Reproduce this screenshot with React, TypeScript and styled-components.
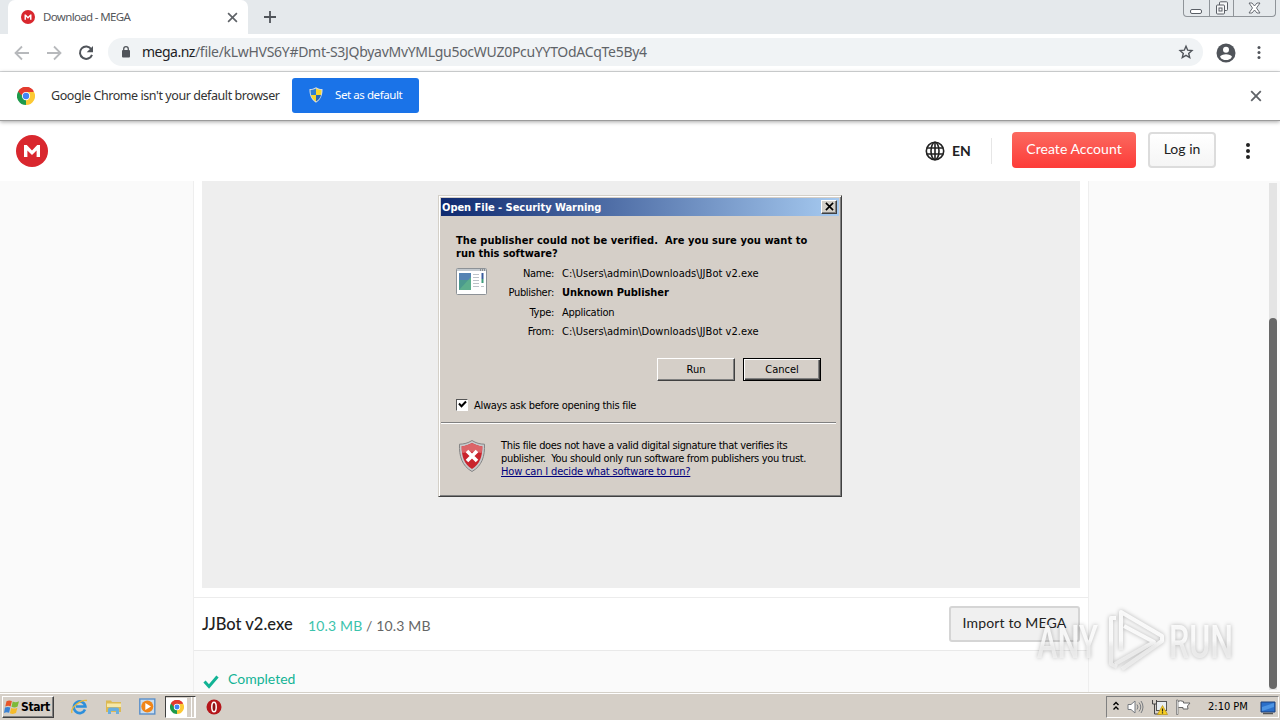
import type { ReactNode } from 'react';
import styled, { createGlobalStyle, css } from 'styled-components';

const GlobalStyle = createGlobalStyle`
  * {
    box-sizing: border-box;
  }
  body {
    margin: 0;
    overflow: hidden;
    background: #fff;
  }
`;

const tahoma = `Tahoma, 'DejaVu Sans Condensed', 'DejaVu Sans', sans-serif`;
const chromeUi = `'Noto Sans', 'Open Sans', sans-serif`;
const lato = `Lato, sans-serif`;

const Screen = styled.div`
  position: relative;
  display: flex;
  flex-direction: column;
  width: 1280px;
  height: 720px;
  overflow: hidden;
  background: #fff;
`;

const Text = styled.span<{ $spacing?: number }>`
  white-space: pre;
  letter-spacing: ${({ $spacing }) => $spacing ?? 0}px;
`;

/* ---------- browser ---------- */

const TabStrip = styled.div`
  display: flex;
  height: 34px;
  padding-left: 8px;
  background: #e5e9ec;
`;

const Tab = styled.div`
  display: flex;
  align-items: center;
  width: 240px;
  padding: 0 10px 0 13px;
  background: #fff;
  border-radius: 7px 7px 0 0;
  font: 11.5px/16px ${chromeUi};
  color: #55585c;

  span {
    flex: 1;
    margin-left: 8px;
  }
`;

const NewTab = styled.div`
  display: flex;
  align-items: center;
  padding-left: 15px;
`;

const WindowControls = styled.div`
  display: flex;
  width: 93px;
  height: 17px;
  margin: 0 4px 0 auto;
  border: 1px solid #8f9499;
  border-top: 0;
  border-radius: 0 0 4px 4px;
`;

const WindowControl = styled.div<{ $width: number }>`
  display: flex;
  align-items: center;
  justify-content: center;
  width: ${({ $width }) => $width}px;

  & + & {
    border-left: 1px solid #8f9499;
  }
`;

const Toolbar = styled.div`
  display: flex;
  align-items: center;
  height: 38px;
  padding: 0 12px 0 13px;
  border-bottom: 1px solid #d9dbdd;
  background: #fff;
`;

const NavIcons = styled.div`
  display: flex;
  gap: 14px;
  width: 95px;
`;

const Omnibox = styled.div`
  display: flex;
  align-items: center;
  width: 1095px;
  height: 28px;
  margin-bottom: 1px;
  padding: 0 9px 0 12px;
  border-radius: 14px;
  background: #f0f3f5;
  font: 14px/20px ${chromeUi};
  color: #5f6368;

  svg:last-child {
    margin-left: auto;
  }
`;

const Host = styled(Text)`
  margin-left: 10px;
  color: #202124;
`;

const ToolbarEnd = styled.div`
  display: flex;
  flex: 1;
  align-items: center;
  justify-content: space-between;
  padding: 0 6px 0 13px;
`;

const InfoBar = styled.div`
  position: relative;
  z-index: 1;
  display: flex;
  align-items: center;
  height: 49px;
  padding: 0 18px 0 17px;
  border-bottom: 1px solid #9b9b9b;
  box-shadow: 0 1px 4px rgba(0, 0, 0, 0.35);
  background: #fff;
  font: 12.5px/18px ${chromeUi};
  color: #333;
`;

const InfoText = styled(Text)`
  width: 241px;
  margin: 0 0 1px 16px;
`;

const DefaultButton = styled.div`
  display: flex;
  align-items: center;
  width: 127px;
  height: 35px;
  margin-bottom: 2px;
  padding-left: 16px;
  border-radius: 3px;
  background: #1a73e8;
  font: 11.5px/16px ${chromeUi};
  color: #fff;

  span {
    margin-left: 11px;
  }
`;

const Pusher = styled.div`
  flex: 1;
`;

/* ---------- page ---------- */

const SiteHeader = styled.div`
  display: flex;
  align-items: center;
  height: 60px;
  padding: 0 29px 0 16px;
  background: #fff;
  font: 14px/20px ${lato};
  color: #222;
`;

const Language = styled.div`
  display: flex;
  align-items: center;
  gap: 7px;
  width: 67px;
  height: 26px;
  margin-left: auto;
  border-right: 1px solid #e6e6e6;
  font-weight: 700;
`;

const SiteButton = styled.div<{ $primary?: boolean; $width: number }>`
  display: flex;
  align-items: center;
  justify-content: center;
  width: ${({ $width }) => $width}px;
  height: 36px;
  margin: 0 0 2px 12px;
  padding-bottom: 2px;
  border-radius: 4px;
  ${({ $primary }) =>
    $primary
      ? css`
          margin-left: 20px;
          background: linear-gradient(#fb6a60, #fd3b38);
          color: #fff;
        `
      : css`
          border: 2px solid #dcdcdc;
          background: linear-gradient(#fff, #f5f5f5);
        `}
`;

const SiteMenu = styled.div`
  display: flex;
  width: 6px;
  margin-left: 29px;
`;

const Viewport = styled.div`
  display: flex;
  flex: 1;
  min-height: 0;
  background: #fafafa;
`;

const Sheet = styled.div`
  width: 896px;
  margin-left: 193px;
  border: solid #eee;
  border-width: 0 1px;
  background: #fafafa;
`;

const Preview = styled.div`
  height: 417px;
  padding: 0 8px 9px;
  border-bottom: 1px solid #ececec;
  background: #fff;
`;

const PreviewFill = styled.div`
  height: 407px;
  background: #eee;
`;

const FileRow = styled.div`
  display: flex;
  align-items: center;
  height: 53px;
  padding: 0 8px;
  border-bottom: 1px solid #e9e9e9;
  background: #fff;
  font: 14px/20px ${lato};
  color: #666;
`;

const FileName = styled(Text)`
  width: 106px;
  margin-bottom: 1px;
  color: #222;
  font-size: 16.5px;
  font-weight: 500;
`;

const FileSize = styled.div`
  margin-top: 3px;
  letter-spacing: 0.15px;

  b {
    color: #3cc3ac;
    font-weight: 400;
  }
`;

const ImportButton = styled.div`
  display: flex;
  align-items: center;
  justify-content: center;
  width: 131px;
  height: 36px;
  margin-left: auto;
  padding-bottom: 2px;
  border: 2px solid #d5d5d5;
  border-radius: 3px;
  background: #f0f0f0;
  color: #222;
`;

const Completed = styled.div`
  display: flex;
  align-items: center;
  gap: 9px;
  padding: 18px 0 0 9px;
  font: 14px/20px ${lato};
  color: #12b395;

  svg {
    margin-top: 6px;
  }
`;

const ScrollTrack = styled.div`
  width: 8px;
  margin: 2px 3px 2px auto;
  padding-top: 135px;
  background: #e4e4e4;
`;

const ScrollThumb = styled.div`
  height: 371px;
  border-radius: 4px;
  background: #686868;
`;

/* ---------- security dialog ---------- */

const Dialog = styled.div`
  position: absolute;
  z-index: 2;
  left: 438px;
  top: 195px;
  display: flex;
  flex-direction: column;
  width: 404px;
  height: 302px;
  padding: 1px;
  border: 1px solid;
  border-color: #d4d0c8 #404040 #404040 #d4d0c8;
  box-shadow: inset 1px 1px #fff, inset -1px -1px #808080;
  background: #d5cfc8;
  font: 11px/13px ${tahoma};
  color: #000;
`;

const TitleBar = styled.div`
  display: flex;
  align-items: center;
  justify-content: space-between;
  height: 18px;
  margin: 1px 1px 0;
  padding: 0 2px 0 1px;
  background: linear-gradient(90deg, #0f2a70, #a6caf0);
  color: #fff;
  font-weight: 700;
`;

const raised = css`
  border: 1px solid;
  border-color: #fff #404040 #404040 #fff;
  box-shadow: inset -1px -1px #808080;
`;

const CloseButton = styled.div`
  ${raised}
  display: flex;
  align-items: center;
  justify-content: center;
  width: 16px;
  height: 14px;
  margin-bottom: 1px;
  background: #d4d0c8;
`;

const Question = styled.div`
  display: flex;
  flex-direction: column;
  margin: 18px 0 0 16px;
  font-weight: 700;
`;

const Details = styled.div`
  display: flex;
  margin: 7px 0 0 16px;

  > svg {
    margin-top: 1px;
  }
`;

const DetailList = styled.div`
  display: grid;
  grid-template-columns: 66px auto;
  column-gap: 8px;
  grid-auto-rows: 19.4px;

  span:nth-child(odd) {
    text-align: right;
    letter-spacing: -0.3px;
  }
`;

const Strong = styled(Text)`
  font-weight: 700;
`;

const ButtonRow = styled.div`
  display: flex;
  justify-content: flex-end;
  gap: 8px;
  margin: 13px 19px 0 0;
`;

const DialogButton = styled.div<{ $focused?: boolean }>`
  ${raised}
  display: flex;
  align-items: center;
  justify-content: center;
  width: 78px;
  height: 23px;
  ${({ $focused }) =>
    $focused &&
    css`
      border: 1px solid #000;
      box-shadow: inset 1px 1px #fff, inset -1px -1px #404040, inset -2px -2px #808080;
    `}
`;

const CheckRow = styled.div`
  display: flex;
  align-items: center;
  gap: 6px;
  margin: 18px 0 0 16px;
`;

const CheckBox = styled.div`
  display: flex;
  align-items: center;
  justify-content: center;
  width: 12px;
  height: 12px;
  margin-bottom: 1px;
  border: 1px solid;
  border-color: #555 #fff #fff #555;
  background: #fff;
`;

const Rule = styled.div`
  height: 2px;
  margin: 10px 4px 0 1px;
  border-top: 1px solid #808080;
  border-bottom: 1px solid #fff;
`;

const Notice = styled.div`
  display: flex;
  gap: 15px;
  margin: 15px 0 0 18px;
`;

const NoticeText = styled.div`
  display: flex;
  flex-direction: column;
  align-items: flex-start;
`;

const HelpLink = styled(Text)`
  color: #00007c;
  text-decoration: underline;
`;

/* ---------- taskbar ---------- */

const Taskbar = styled.div`
  position: relative;
  display: flex;
  align-items: center;
  height: 28px;
  border-top: 1px solid #d4d0c8;
  box-shadow: inset 0 1px #fff;
  background: #d5cfc7;
  font: 11px/14px ${tahoma};
`;

const StartButton = styled.div`
  ${raised}
  display: flex;
  align-items: center;
  gap: 1px;
  width: 52px;
  height: 22px;
  margin: 1px 17px 0 2px;
  padding-left: 1px;
  font-size: 12px;
  font-weight: 700;
`;

const QuickLaunch = styled.div`
  display: flex;
  align-items: center;
  gap: 17px;
`;

const ActiveTask = styled.div`
  display: flex;
  align-items: center;
  width: 31px;
  height: 22px;
  margin: 1px 10px 0 9px;
  border: 1px solid #fff;
  border-top: 1px solid #404040;
  border-left: 1px solid #404040;
`;

const TaskFace = styled.div`
  display: flex;
  align-items: center;
  justify-content: center;
  width: 22px;
  height: 19px;
  margin-right: 2px;
  background: #fff;
`;

const TaskEdge = styled.div`
  width: 3px;
  height: 20px;
  border-right: 1px solid #fff;
`;

const Tray = styled.div`
  display: flex;
  align-items: center;
  width: 173px;
  height: 22px;
  margin: 1px 1px 0 auto;
  padding: 0 2px 0 5px;
  border: 1px solid;
  border-color: #808080 #fff #fff #808080;

  svg {
    margin-right: 7px;
  }
  span {
    margin-left: 9px;
  }
  svg:last-child {
    margin: 0 0 0 auto;
  }
`;

const Watermark = styled.svg`
  position: absolute;
  z-index: 3;
  left: 1030px;
  top: 590px;
  filter: drop-shadow(0 0 2px rgba(0, 0, 0, 0.32));
`;

function MegaLogo({ size }: { size: number }) {
  return (
    <svg width={size} height={size} viewBox="0 0 32 32">
      <circle cx="16" cy="16" r="16" fill="#d9272e" />
      <path d="M8 22V10h2.8l5.2 5.4 5.2-5.4H24v12h-3.4v-6.600L16 20l-4.600-4.600V22z" fill="#fff" />
    </svg>
  );
}

function ChromeLogo({ size }: { size: number }) {
  return (
    <svg width={size} height={size} viewBox="0 0 48 48">
      <path d="M24 24 3.2 12A24 24 0 0 1 44.8 12z" fill="#e33b2e" />
      <path d="M24 24 44.8 12A24 24 0 0 1 24 48z" fill="#fcc934" />
      <path d="M24 24 24 48A24 24 0 0 1 3.2 12z" fill="#1e9a4b" />
      <path d="M24 13h20.8L24 48l9.500-18.500z" fill="#fcc934" />
      <path d="M3.2 12 14.500 29.500 24 24 24 13z" fill="#1e9a4b" />
      <path d="M3.2 12A24 24 0 0 1 44.800 12L24 13 12 22z" fill="#e33b2e" />
      <circle cx="24" cy="24" r="11" fill="#fff" />
      <circle cx="24" cy="24" r="8.500" fill="#4285f4" />
    </svg>
  );
}

function Cross({ size, color, width = 1.8 }: { size: number; color: string; width?: number }) {
  return (
    <svg width={size} height={size} viewBox="0 0 10 10">
      <path d="M1 1l8 8M9 1l-8 8" stroke={color} strokeWidth={width} />
    </svg>
  );
}

function Dots({ size, color, r }: { size: number; color: string; r: number }) {
  return (
    <svg width="6" height={size} viewBox={`0 0 6 ${size}`} fill={color}>
      <circle cx="3" cy={r} r={r} />
      <circle cx="3" cy={size / 2} r={r} />
      <circle cx="3" cy={size - r} r={r} />
    </svg>
  );
}

function UacShield() {
  return (
    <svg width="16" height="16" viewBox="0 0 16 16">
      <path d="M8 .3c2 1.300 4 1.800 6.500 1.800.3 6-2 11-6.500 13.600C3.500 13 1.200 8 1.500 2.100c2.500 0 4.500-.5 6.500-1.800z" fill="#d7dde2" />
      <path d="M8 1.600V8H3C2.700 6 2.500 4.500 2.600 3.100 5 3 6.500 2.500 8 1.600z" fill="#2f7fd1" />
      <path d="M8 1.600V8h5c.3-2 .5-3.500.4-4.900C11 3 9.500 2.500 8 1.600z" fill="#f8d62c" />
      <path d="M3 8h5v6.500C5 12.800 3.500 10.500 3 8z" fill="#f8d62c" />
      <path d="M13 8H8v6.500c3-1.700 4.500-4 5-6.500z" fill="#2668b8" />
    </svg>
  );
}

function Browser({ children }: { children: ReactNode }) {
  return (
    <>
      <TabStrip>
        <Tab>
          <MegaLogo size={14} />
          <Text $spacing={-0.65}>Download - MEGA</Text>
          <Cross size={11} color="#5f6368" width={1.5} />
        </Tab>
        <NewTab>
          <svg width="14" height="14" viewBox="0 0 14 14">
            <path d="M7 1v12M1 7h12" stroke="#50545a" strokeWidth="1.8" />
          </svg>
        </NewTab>
        <WindowControls>
          <WindowControl $width={25}>
            <svg width="12" height="14" viewBox="0 0 12 14">
              <rect x=".5" y="8.500" width="11" height="4" rx="1.500" fill="#fff" stroke="#5a5f66" />
            </svg>
          </WindowControl>
          <WindowControl $width={25}>
            <svg width="14" height="14" viewBox="0 0 14 14" fill="#f6f7f8" stroke="#5a5f66">
              <rect x="4.500" y=".8" width="8" height="8.700" rx="1" />
              <rect x="1.500" y="4" width="8" height="9" rx="1" />
              <rect x="4" y="7" width="3" height="3" />
            </svg>
          </WindowControl>
          <WindowControl $width={42}>
            <svg width="13" height="12" viewBox="0 0 13 12">
              <path
                d="M1 1h3l2.500 3L9 1h3L8.500 6l3.500 5H9L6.500 8 4 11H1l3.500-5z"
                fill="#fff"
                stroke="#5a5f66"
                strokeWidth=".9"
              />
            </svg>
          </WindowControl>
        </WindowControls>
      </TabStrip>
      <Toolbar>
        <NavIcons>
          <svg width="18" height="18" viewBox="0 0 18 18" fill="none" stroke="#b7b9bc" strokeWidth="1.800">
            <path d="M16 9H3M9 2.500 2.500 9 9 15.500" />
          </svg>
          <svg width="18" height="18" viewBox="0 0 18 18" fill="none" stroke="#b7b9bc" strokeWidth="1.800">
            <path d="M2 9h13M9 2.500 15.500 9 9 15.500" />
          </svg>
          <svg width="18" height="18" viewBox="0 0 18 18">
            <path d="M14.300 5.200A6.200 6.200 0 1 0 15 10.800" fill="none" stroke="#50545a" strokeWidth="2" />
            <path d="M16 2v6.300H9.700z" fill="#50545a" />
          </svg>
        </NavIcons>
        <Omnibox>
          <svg width="12" height="14" viewBox="0 0 12 14">
            <rect x="2" y="5" width="8" height="7.500" rx="1" fill="#50545a" />
            <path d="M3.700 5.500V4a2.300 2.300 0 0 1 4.600 0v1.500" fill="none" stroke="#50545a" strokeWidth="1.300" />
          </svg>
          <Host $spacing={-0.5}>mega.nz</Host>
          <Text $spacing={-0.29}>/file/kLwHVS6Y#Dmt-S3JQbyavMvYMLgu5ocWUZ0PcuYYTOdACqTe5By4</Text>
          <svg width="16" height="16" viewBox="0 0 16 16">
            <path
              d="M8 2.200l1.700 4 4.200.4-3.200 2.800 1 4.200L8 11.300l-3.700 2.300 1-4.200-3.200-2.800 4.200-.4z"
              fill="none"
              stroke="#50545a"
              strokeWidth="1.400"
            />
          </svg>
        </Omnibox>
        <ToolbarEnd>
          <svg width="20" height="20" viewBox="0 0 20 20">
            <circle cx="10" cy="10" r="9.500" fill="#50545a" />
            <circle cx="10" cy="6.800" r="3" fill="#fff" />
            <path d="M4 13.700c1-3.400 11-3.400 12 0a7 7 0 0 1-12 0z" fill="#fff" />
          </svg>
          <Dots size={13} color="#50545a" r={1.5} />
        </ToolbarEnd>
      </Toolbar>
      <InfoBar>
        <ChromeLogo size={18} />
        <InfoText $spacing={-0.43}>Google Chrome isn't your default browser</InfoText>
        <DefaultButton>
          <UacShield />
          <Text $spacing={-0.42}>Set as default</Text>
        </DefaultButton>
        <Pusher />
        <Cross size={12} color="#5f6368" width={1.5} />
      </InfoBar>
      {children}
    </>
  );
}

function MegaPage() {
  return (
    <>
      <SiteHeader>
        <MegaLogo size={32} />
        <Language>
          <svg width="20" height="20" viewBox="0 0 20 20" fill="none" stroke="#222" strokeWidth="1.600">
            <circle cx="10" cy="10" r="8.700" />
            <ellipse cx="10" cy="10" rx="4" ry="8.700" />
            <path d="M10 1v18M1.800 7h16.400M1.800 13h16.400" />
          </svg>
          EN
        </Language>
        <SiteButton $primary $width={124}>
          <Text $spacing={0.05}>Create Account</Text>
        </SiteButton>
        <SiteButton $width={68}>
          <Text>Log in</Text>
        </SiteButton>
        <SiteMenu>
          <Dots size={16} color="#222" r={2} />
        </SiteMenu>
      </SiteHeader>
      <Viewport>
        <Sheet>
          <Preview>
            <PreviewFill />
          </Preview>
          <FileRow>
            <FileName>JJBot v2.exe</FileName>
            <FileSize>
              <b>10.3 MB</b> / 10.3 MB
            </FileSize>
            <ImportButton>
              <Text $spacing={0.15}>Import to MEGA</Text>
            </ImportButton>
          </FileRow>
          <Completed>
            <svg width="16" height="14" viewBox="0 0 16 14">
              <path d="M1.500 6.500 6 11.500 14.500 1.500" fill="none" stroke="#12b395" strokeWidth="3" />
            </svg>
            <Text>Completed</Text>
          </Completed>
        </Sheet>
        <ScrollTrack>
          <ScrollThumb />
        </ScrollTrack>
      </Viewport>
    </>
  );
}

function SecurityDialog() {
  return (
    <Dialog>
      <TitleBar>
        <Text $spacing={-0.03}>Open File - Security Warning</Text>
        <CloseButton>
          <Cross size={9} color="#000" width={1.8} />
        </CloseButton>
      </TitleBar>
      <Question>
        <Text $spacing={0.07}>The publisher could not be verified.  Are you sure you want to</Text>
        <Text>run this software?</Text>
      </Question>
      <Details>
        <svg width="32" height="28" viewBox="0 0 32 28">
          <rect x=".5" y=".5" width="30" height="26" rx="1" fill="#fff" stroke="#8d9297" />
          <path d="M1 2h29" stroke="#c3c9ce" strokeWidth="2" />
          <path d="M24 2h5" stroke="#555" strokeDasharray="1 1" />
          <rect x="3" y="5" width="12" height="17" fill="#4b9a8e" />
          <rect x="3" y="5" width="12" height="7" fill="#5583b3" />
          <path d="M3 22 15 9v13z" fill="#5cae8c" />
          <path d="M17 6.500h6M17 9.500h6M17 12.500h6M17 15.500h6M17 18.500h6M25 18.500h3" stroke="#bcc2c8" />
          <path d="M26.500 5v6" stroke="#3a5c9c" strokeWidth="2" />
          <path d="M26.500 11v4" stroke="#3f9a7a" strokeWidth="2" />
        </svg>
        <DetailList>
          <Text>Name:</Text>
          <Text $spacing={0.04}>C:\Users\admin\Downloads\JJBot v2.exe</Text>
          <Text>Publisher:</Text>
          <Strong $spacing={-0.06}>Unknown Publisher</Strong>
          <Text>Type:</Text>
          <Text $spacing={-0.28}>Application</Text>
          <Text>From:</Text>
          <Text $spacing={0.04}>C:\Users\admin\Downloads\JJBot v2.exe</Text>
        </DetailList>
      </Details>
      <ButtonRow>
        <DialogButton>
          <Text>Run</Text>
        </DialogButton>
        <DialogButton $focused>
          <Text>Cancel</Text>
        </DialogButton>
      </ButtonRow>
      <CheckRow>
        <CheckBox>
          <svg width="9" height="9" viewBox="0 0 9 9">
            <path d="M1 3.500 3.500 6.300 8 1.500" fill="none" stroke="#000" strokeWidth="2" />
          </svg>
        </CheckBox>
        <Text $spacing={-0.29}>Always ask before opening this file</Text>
      </CheckRow>
      <Rule />
      <Notice>
        <svg width="28" height="34" viewBox="0 0 28 34">
          <path
            d="M14 1.500c4 2.600 8 3.600 12.500 3.700C27 17 24 27 14 32.500 4 27 1 17 1.500 5.200 6 5.100 10 4.100 14 1.500z"
            fill="#c7c9cb"
            stroke="#858585"
          />
          <path
            d="M14 4c3.500 2 6.700 3 10.300 3.200C24.500 17 22 25 14 30 6 25 3.500 17 3.700 7.200 7.300 7 10.500 6 14 4z"
            fill="#c9242d"
          />
          <path d="M14 4c3.500 2 6.700 3 10.300 3.200 0 3-.3 5-.8 7-6-2-13-2-19 0-.6-2-.8-4-.8-7C7.300 7 10.500 6 14 4z" fill="#dc6468" />
          <path d="M9 12l10 10M19 12 9 22" stroke="#fff" strokeWidth="3.600" />
        </svg>
        <NoticeText>
          <Text $spacing={-0.34}>This file does not have a valid digital signature that verifies its</Text>
          <Text $spacing={-0.34}>publisher.  You should only run software from publishers you trust.</Text>
          <HelpLink $spacing={-0.17}>How can I decide what software to run?</HelpLink>
        </NoticeText>
      </Notice>
    </Dialog>
  );
}

function WindowsTaskbar() {
  return (
    <Taskbar>
      <StartButton>
        <svg width="16" height="16" viewBox="0 0 16 16">
          <path d="M2.500 2.200c2-1 3.500-1 5.400-.1L6.600 7.400c-1.700-.8-3.200-.8-5.300.1z" fill="#e8562a" />
          <path d="M8.700 2.500c2 1 3.900.9 6.300-.3l-1.400 5.400c-2.100 1.100-4.100 1.100-6.100.1z" fill="#7dba3a" />
          <path d="M1 8.600c1.900-.9 3.500-.9 5.300-.1l-1.200 5.300c-1.700-.8-3.200-.8-5.100.1z" fill="#3b82d4" />
          <path d="M7.200 8.900c2 1 3.800.9 6.200-.2L12 14.100c-2.100 1.100-4.200 1-6.100.1z" fill="#f5bb2b" />
        </svg>
        <Text $spacing={-0.4}>Start</Text>
      </StartButton>
      <QuickLaunch>
        <svg width="17" height="17" viewBox="0 0 17 17" fill="none">
          <path d="M14 11.500a5.800 5.800 0 1 1 .4-3H5" stroke="#2d8fdb" strokeWidth="2.600" />
          <path d="M1 15C-1 10 10 1 16 2.500" stroke="#e9b93a" strokeWidth="1.300" />
        </svg>
        <svg width="17" height="17" viewBox="0 0 17 17">
          <path d="M1 2.500h5l1 1.500h9v10H1z" fill="#dcb953" />
          <path d="M2 5.500h14V9H2z" fill="#f7e8a6" />
          <path d="M3 16v-4.500q0-2 2-2h7q2 0 2 2V16h-3v-3H6v3z" fill="#69aede" />
        </svg>
        <svg width="17" height="17" viewBox="0 0 17 17">
          <rect x=".8" y="1" width="15" height="15" fill="#c9ddf0" stroke="#5a8fc9" strokeWidth="1.400" />
          <circle cx="8.300" cy="8.500" r="6" fill="#f08519" />
          <path d="M6.300 5v7l5.700-3.500z" fill="#fff" />
        </svg>
      </QuickLaunch>
      <ActiveTask>
        <TaskFace>
          <ChromeLogo size={14} />
        </TaskFace>
        <TaskEdge />
        <TaskEdge />
      </ActiveTask>
      <svg width="16" height="16" viewBox="0 0 16 16">
        <circle cx="8" cy="8" r="7.500" fill="#b5161b" />
        <ellipse cx="8" cy="8" rx="2.200" ry="4.800" fill="#8e1014" stroke="#fff" strokeWidth="1.500" />
      </svg>
      <Tray>
        <svg width="8" height="12" viewBox="0 0 8 12" fill="none" stroke="#000" strokeWidth="1.400">
          <path d="M1.500 4 4 1.500 6.500 4M1.500 8.500 4 6l2.500 2.500" />
        </svg>
        <svg width="17" height="16" viewBox="0 0 17 16" fill="none" stroke="#777b80">
          <path d="M1 5.500h3L8 2v12l-4-3.500H1z" fill="#fff" />
          <path d="M10 5.500q2 2.500 0 5M12 3.500q3.500 4.500 0 9M14 2q4 6 0 12" />
        </svg>
        <svg width="17" height="17" viewBox="0 0 17 17">
          <rect x="5.500" y="2.500" width="10" height="9" fill="#e8edf0" stroke="#555" />
          <path d="M1.500 1v4h4V1M3.500 5v10h6" fill="none" stroke="#444" />
          <path d="M11.500 6.500l5 9h-10z" fill="#f7cf23" stroke="#b88f10" strokeWidth=".7" />
          <path d="M11.500 9.500v3M11.500 13.300v1.200" stroke="#222" strokeWidth="1.200" />
        </svg>
        <svg width="17" height="16" viewBox="0 0 17 16">
          <path d="M2.500 2.500q3-1.500 6 0v1.500h6.500l-2.500 3 .5 3H8V8.500H3.500" fill="#fff" stroke="#666" />
          <path d="M1.500 1v14.500h1.500V1z" fill="#fff" stroke="#666" strokeWidth=".7" />
        </svg>
        <Text>2:10 PM</Text>
        <svg width="16" height="15" viewBox="0 0 16 15">
          <path d="M1 2h14v10H1z" fill="#2b6fc9" stroke="#1d3f78" />
          <path d="M2 7 14 3v4L2 11z" fill="#4d94e3" />
          <path d="M3 13.500h10" stroke="#555" strokeWidth="1.500" />
        </svg>
      </Tray>
    </Taskbar>
  );
}

function AnyRunWatermark() {
  return (
    <Watermark width="230" height="100" viewBox="0 -10 230 100">
      <defs>
        <linearGradient id="fade" x1="0" y1="0" x2="0" y2="84" gradientUnits="userSpaceOnUse">
          <stop offset=".48" stopColor="#fff" stopOpacity=".85" />
          <stop offset=".56" stopColor="#f0f0f0" stopOpacity=".8" />
        </linearGradient>
      </defs>
      <g fill="url(#fade)" fontFamily="Roboto, sans-serif" fontSize="46" fontWeight="500">
        <text x="7" y="58" textLength="61" lengthAdjust="spacingAndGlyphs">
          ANY
        </text>
        <text x="139" y="58" textLength="64" lengthAdjust="spacingAndGlyphs">
          RUN
        </text>
      </g>
      <g fill="none" stroke="url(#fade)" strokeWidth="4" strokeLinejoin="round">
        <path d="M91 50V12l41 24v5L92 69" />
        <path d="M86 18h-5v46l6 3" />
        <path d="M94 26l30 16-39 22" />
      </g>
    </Watermark>
  );
}

export default function App() {
  return (
    <Screen>
      <GlobalStyle />
      <Browser>
        <MegaPage />
      </Browser>
      <WindowsTaskbar />
      <SecurityDialog />
      <AnyRunWatermark />
    </Screen>
  );
}
